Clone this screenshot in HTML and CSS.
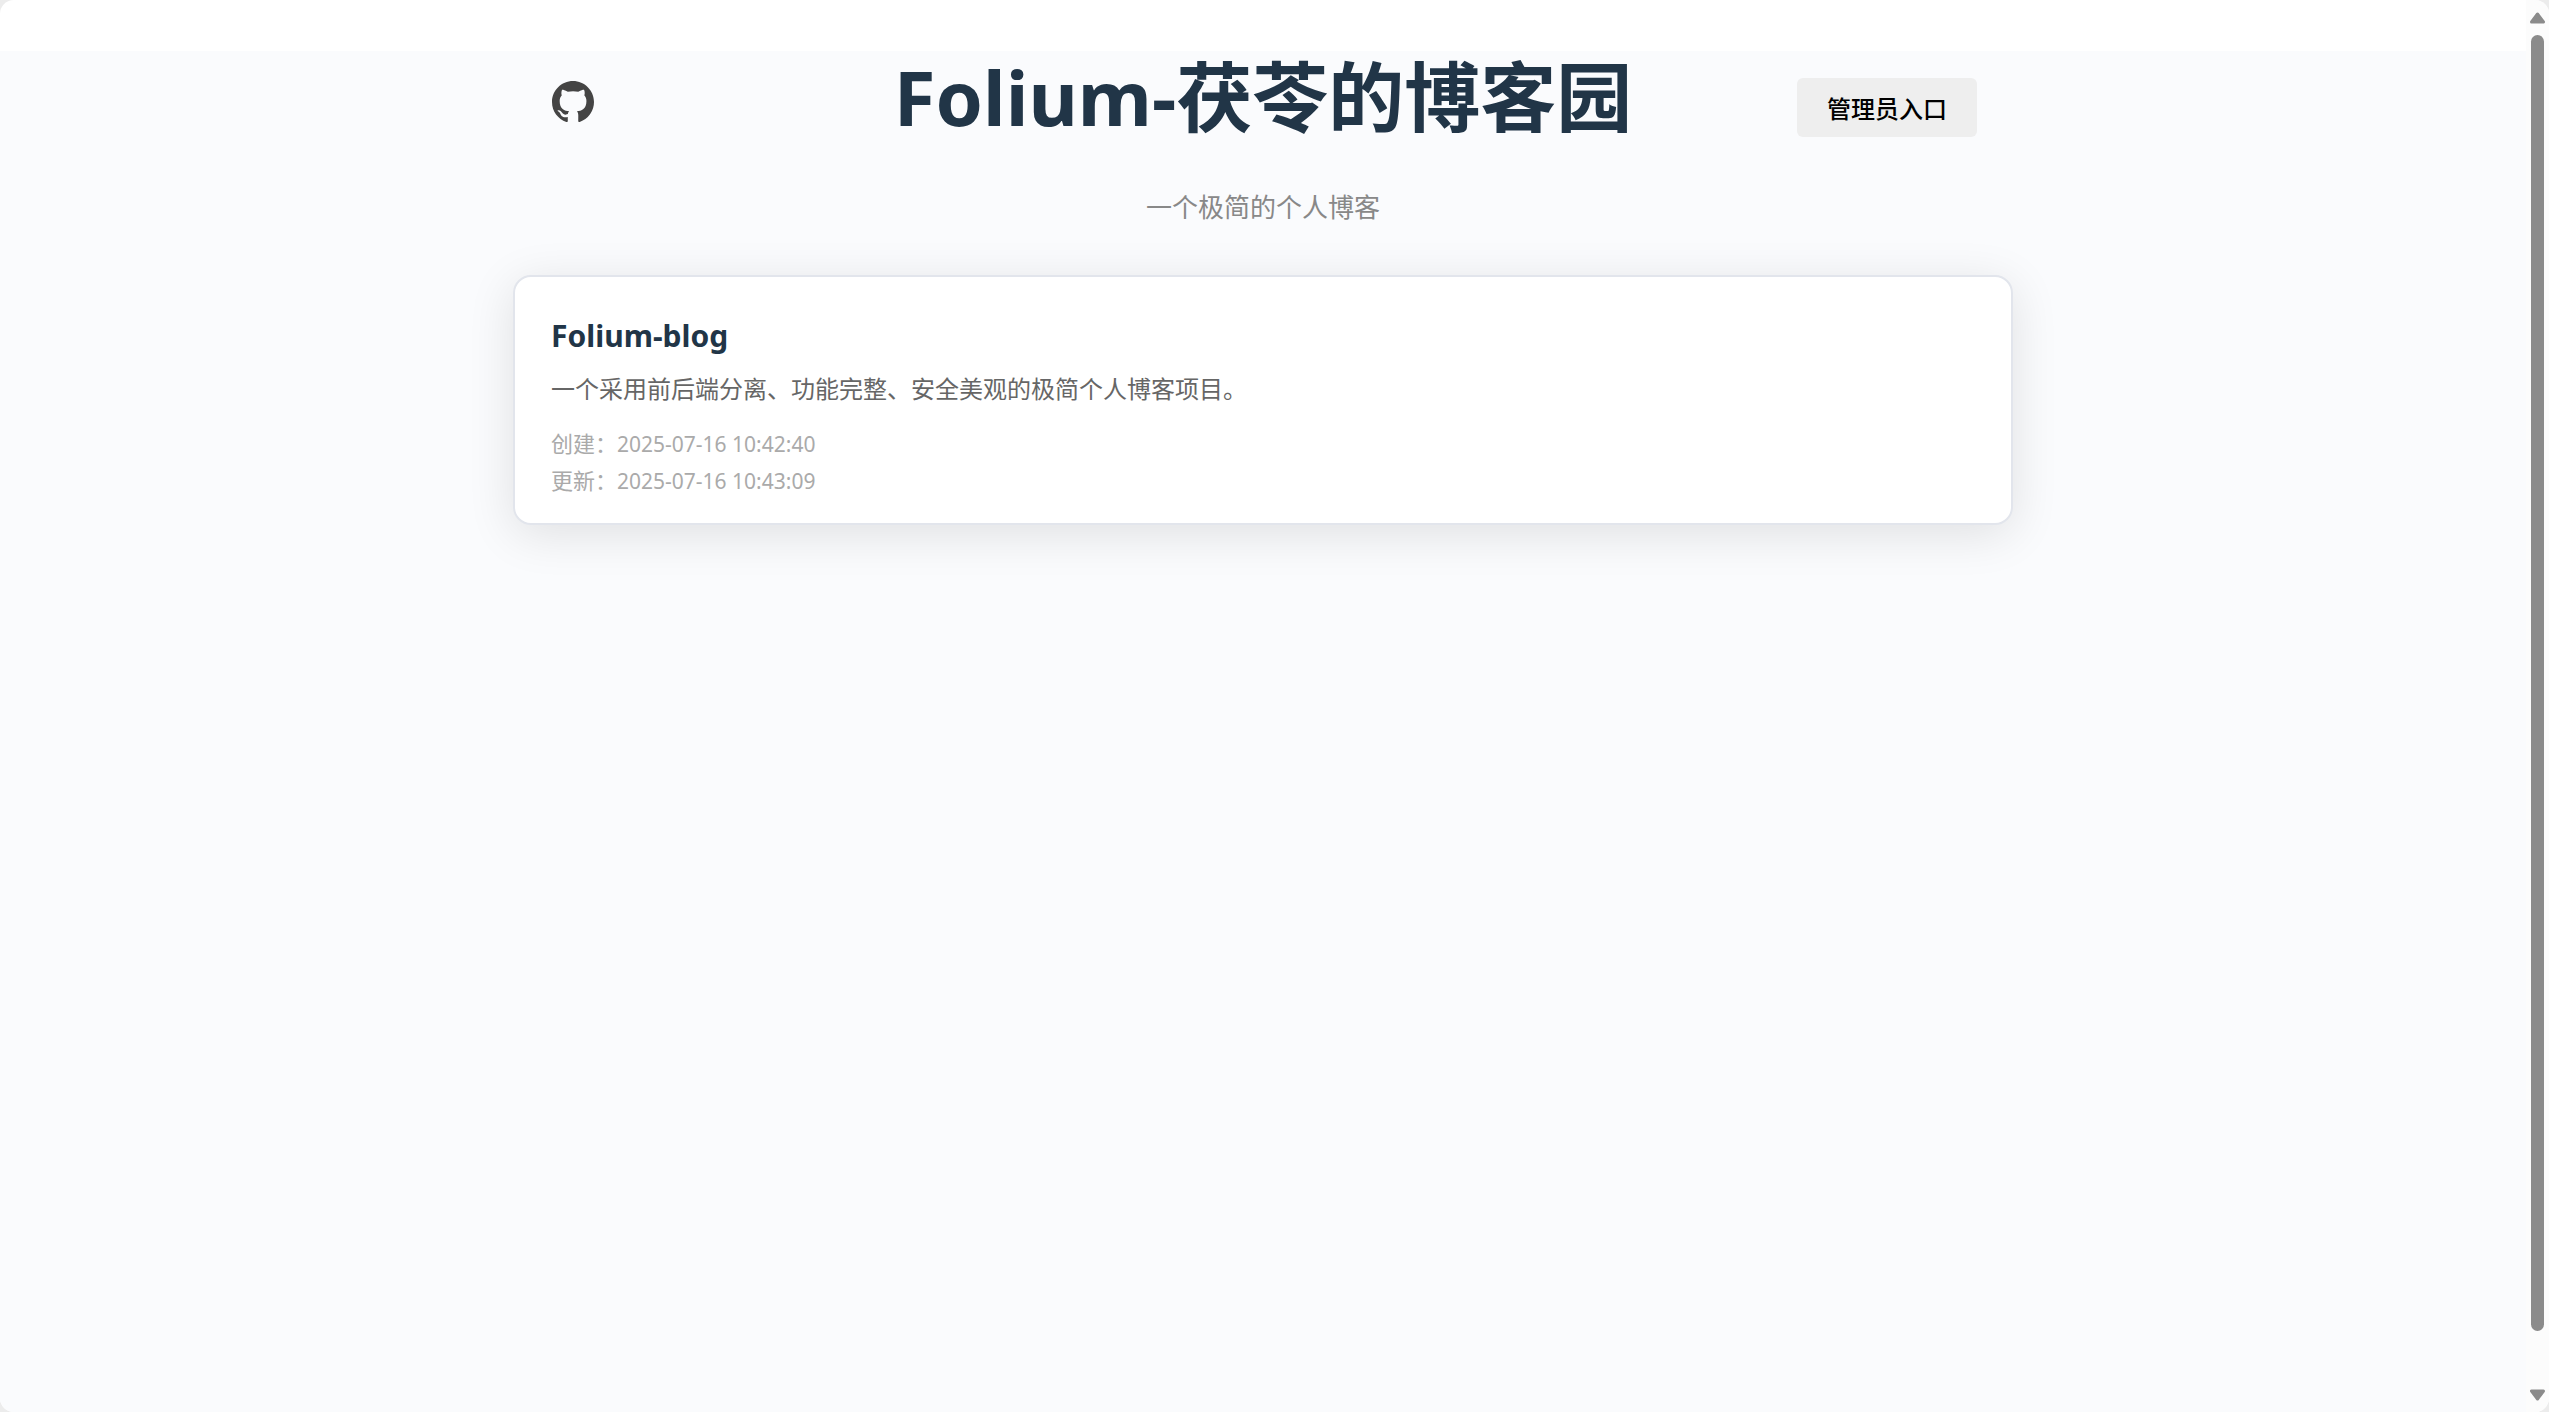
FILE: index.html
```html
<!DOCTYPE html>
<html lang="zh-CN">
<head>
<meta charset="utf-8">
<meta name="viewport" content="width=device-width, initial-scale=1">
<title>Folium-茯苓的博客园</title>
<link rel="stylesheet" href="styles.css">
</head>
<body>
<div class="window">
  <div class="page">
    <div class="container">
      <header class="header">
        <a class="github" href="#" aria-label="GitHub">
          <svg viewBox="0 0 16 16" aria-hidden="true"><path d="M8 0C3.58 0 0 3.58 0 8c0 3.54 2.29 6.53 5.47 7.59.4.07.55-.17.55-.38 0-.19-.01-.82-.01-1.49-2.01.37-2.53-.49-2.69-.94-.09-.23-.48-.94-.82-1.13-.28-.15-.68-.52-.01-.53.63-.01 1.08.58 1.23.82.72 1.21 1.87.87 2.33.66.07-.52.28-.87.51-1.07-1.78-.2-3.64-.89-3.64-3.95 0-.87.31-1.59.82-2.15-.08-.2-.36-1.02.08-2.12 0 0 .67-.21 2.2.82.64-.18 1.32-.27 2-.27s1.36.09 2 .27c1.53-1.04 2.2-.82 2.2-.82.44 1.1.16 1.92.08 2.12.51.56.82 1.27.82 2.15 0 3.07-1.87 3.75-3.65 3.95.29.25.54.73.54 1.48 0 1.07-.01 1.93-.01 2.2 0 .21.15.46.55.38A8.01 8.01 0 0 0 16 8c0-4.42-3.58-8-8-8z"/></svg>
        </a>
        <h1 class="title">Folium-茯苓的博客园</h1>
        <button class="admin" type="button">管理员入口</button>
      </header>
      <p class="subtitle">一个极简的个人博客</p>
      <main>
        <article class="card">
          <h2 class="card-title">Folium-blog</h2>
          <p class="card-text">一个采用前后端分离、功能完整、安全美观的极简个人博客项目。</p>
          <div class="card-meta">
            <div>创建：<time>2025-07-16 10:42:40</time></div>
            <div>更新：<time>2025-07-16 10:43:09</time></div>
          </div>
        </article>
      </main>
    </div>
  </div>
  <div class="scrollbar" aria-hidden="true">
    <svg class="arrow" viewBox="0 0 17 12"><path d="M8.500 2L14.500 10H2.500Z"/></svg>
    <div class="thumb"></div>
    <svg class="arrow" viewBox="0 0 17 12"><path d="M8.500 10L2.500 2H14.500Z"/></svg>
  </div>
</div>
</body>
</html>
```
FILE: styles.css
```css
* {
  box-sizing: border-box;
}

body {
  margin: 0;
  background: #ececec;
  font-family: "Noto Sans", "Noto Sans CJK SC", sans-serif;
}

h1, h2, p {
  margin: 0;
}

.window {
  display: flex;
  min-height: 100vh;
  border-radius: 14px;
  overflow: hidden;
  background: #fff;
}

.page {
  flex: 1;
  margin-top: 51px;
  background: #fafbfd;
}

.container {
  max-width: 1500px;
  margin: 0 auto;
}

.header {
  display: grid;
  grid-template-columns: 1fr auto 1fr;
  align-items: start;
  padding: 0 36px;
}

.github {
  justify-self: start;
  margin: 30px 0 0 3px;
}

.github svg {
  display: block;
  width: 42px;
  height: 42px;
  fill: #444;
}

.title {
  color: #213547;
  font-size: 76px;
  font-weight: 700;
  line-height: 92px;
}

.admin {
  justify-self: end;
  margin-top: 27px;
  padding: 13px 30px 11px;
  border: 0;
  border-radius: 6px;
  background: #eee;
  color: #000;
  font: 500 24px/35px "Noto Sans", "Noto Sans CJK SC", sans-serif;
}

.subtitle {
  margin: 44px 0 48px;
  color: #888;
  font-size: 26px;
  line-height: 40px;
  text-align: center;
}

.card {
  padding: 35px 36px 24px;
  border: 2px solid #e2e5ec;
  border-radius: 18px;
  background: #fff;
  box-shadow: 0 9px 48px rgba(0, 0, 0, 0.11);
}

.card-title {
  color: #213547;
  font-size: 30px;
  line-height: 48px;
}

.card-text {
  margin: 11px 0 18px;
  color: #666;
  font-size: 24px;
  line-height: 36px;
}

.card-meta {
  color: #aaa;
  font-size: 22px;
  line-height: 36px;
}

.card-meta time {
  font-size: 21px;
}

.scrollbar {
  display: flex;
  flex-direction: column;
  align-items: center;
  width: 23px;
  height: 100vh;
  padding: 12px 0 11px;
  background: #fcfcfc;
}

.arrow {
  width: 17px;
  height: 12px;
  fill: #8b8b8b;
  stroke: #8b8b8b;
  stroke-width: 3;
  stroke-linejoin: round;
}

.thumb {
  flex: 1;
  width: 13px;
  margin: 11px 0 58px;
  border-radius: 7px;
  background: #8b8b8b;
}
```
